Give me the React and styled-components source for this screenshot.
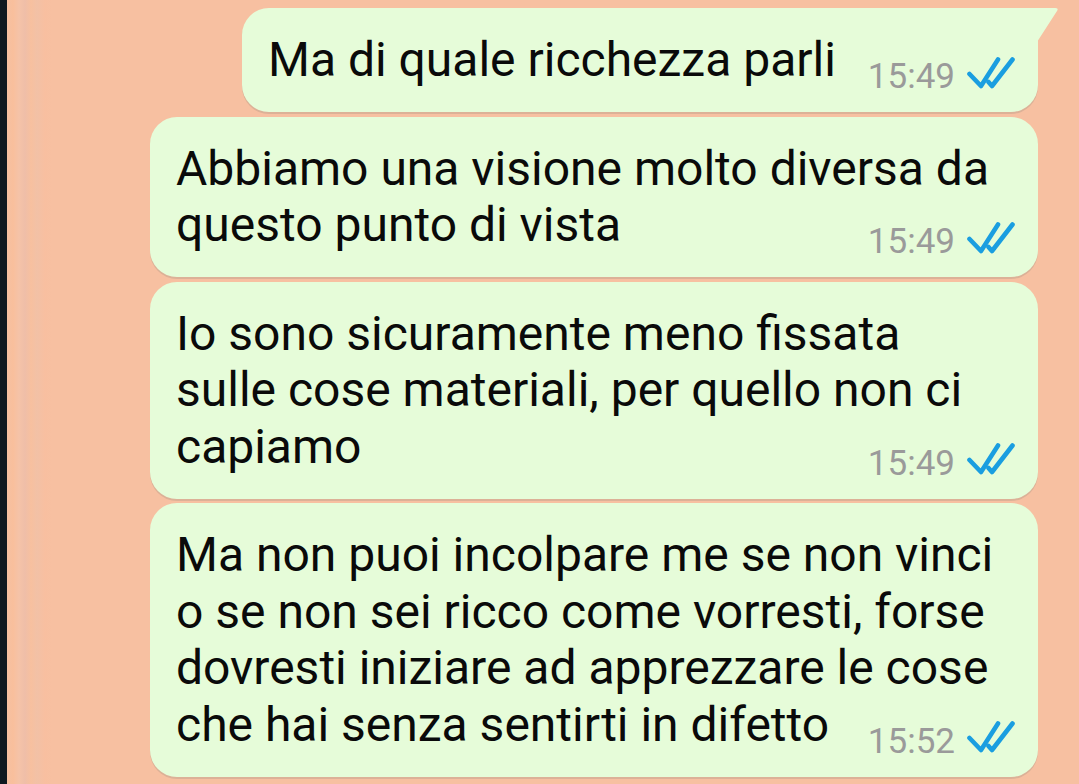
import React from 'react';
import styled, { createGlobalStyle } from 'styled-components';

const Global = createGlobalStyle`
  html, body { margin: 0; padding: 0; }
  body {
    width: 1079px;
    height: 784px;
    overflow: hidden;
    font-family: Roboto, "Noto Sans", "Liberation Sans", sans-serif;
    background:
      linear-gradient(to right,
        #0d1820 0px, #0d1820 7px,
        #f4c0a2 7px, #f9bf9c 13px, #f5c3a8 19px, #efbea8 25px,
        #f7c09f 31px, #f2c1a6 37px, #f8bfa0 45px, #f7c0a1 52px, #f7c0a1 100%);
  }
`;

const Page = styled.div`
  box-sizing: border-box;
  height: 784px;
  padding: 8px 41px 0 0;
  display: flex;
  flex-direction: column;
  align-items: flex-end;
  gap: 4.5px;
`;

const Bubble = styled.div`
  position: relative;
  box-sizing: border-box;
  width: ${(p) => p.$w}px;
  background: #e6fcd9;
  border-radius: 27px;
  border-top-right-radius: ${(p) => (p.$tail ? '0' : '27px')};
  padding: 24px 25px 23.5px 26px;
  box-shadow: 0 2px 0 #dcb197;
`;

const Tail = styled.svg`
  position: absolute;
  top: 0;
  right: -21px;
  width: 22px;
  height: 36px;
`;

const Line = styled.div`
  font-size: 48px;
  line-height: 56.5px;
  color: #0a0a0a;
  white-space: nowrap;
`;

const Meta = styled.div`
  position: absolute;
  right: 23px;
  bottom: 22px;
  display: flex;
  align-items: center;
  gap: 12px;
`;

const Time = styled.span`
  font-size: 35px;
  line-height: 35px;
  color: #9a9a9a;
  position: relative;
  top: 4px;
`;

const Ticks = () => (
  <svg width="48" height="32" viewBox="0 0 48 32" fill="none">
    <path d="M2.5 17 L14 29 L31 2.5" stroke="#1a9ee0" strokeWidth="4.6" strokeLinecap="round" strokeLinejoin="round" />
    <path d="M21.5 25 L25 29 L45.5 2.5" stroke="#1a9ee0" strokeWidth="4.6" strokeLinecap="round" strokeLinejoin="round" />
  </svg>
);

const messages = [
  { w: 796, tail: true, lines: ['Ma di quale ricchezza parli'], time: '15:49' },
  { w: 888, lines: ['Abbiamo una visione molto diversa da', 'questo punto di vista'], time: '15:49' },
  {
    w: 888,
    lines: ['Io sono sicuramente meno fissata', 'sulle cose materiali, per quello non ci', 'capiamo'],
    time: '15:49',
  },
  {
    w: 888,
    lines: [
      'Ma non puoi incolpare me se non vinci',
      'o se non sei ricco come vorresti, forse',
      'dovresti iniziare ad apprezzare le cose',
      'che hai senza sentirti in difetto',
    ],
    time: '15:52',
  },
];

export default function App() {
  return (
    <>
      <Global />
      <Page>
        {messages.map((m, i) => (
          <Bubble key={i} $w={m.w} $tail={m.tail}>
            {m.tail && (
              <Tail viewBox="0 0 22 36">
                <path d="M0 0 L18 0 Q22 0 20 3 L0 34 Z" fill="#e6fcd9" />
              </Tail>
            )}
            {m.lines.map((l, j) => (
              <Line key={j}>{l}</Line>
            ))}
            <Meta>
              <Time>{m.time}</Time>
              <Ticks />
            </Meta>
          </Bubble>
        ))}
      </Page>
    </>
  );
}
